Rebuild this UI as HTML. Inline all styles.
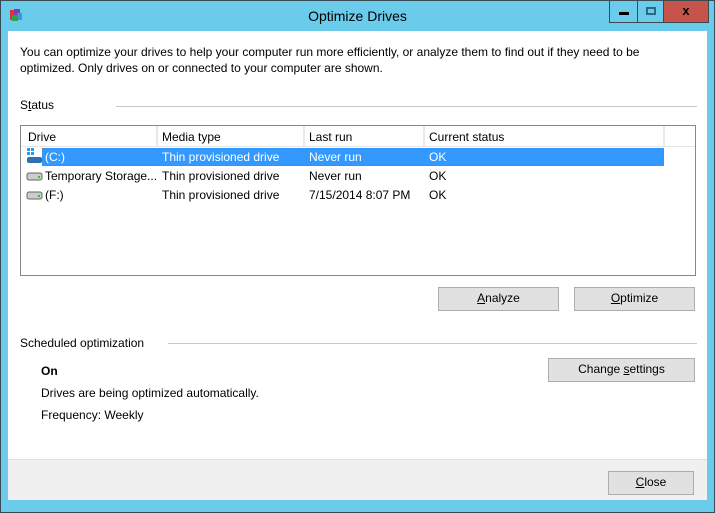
<!DOCTYPE html>
<html><head><style>
*{margin:0;padding:0;box-sizing:border-box}
body{width:715px;height:513px;overflow:hidden;font-family:"Liberation Sans",sans-serif;font-size:12px;color:#000;background:#fff}
.win{position:absolute;left:0;top:0;width:715px;height:513px;background:#6bcbea;border:1px solid #3a4a55}
.abs{position:absolute;white-space:nowrap}
.client{position:absolute;left:7px;top:30px;width:699px;height:469px;background:#fff}
.footer{position:absolute;left:0;top:428px;width:699px;height:41px;background:#f0f0f0;border-top:1px solid #dfdfdf}
.btn{position:absolute;background:#e1e1e1;border:1px solid #adadad;text-align:center;line-height:21px}
.cbtn{position:absolute;top:0;height:22px;border:1px solid #3a4a55;border-top:none}
</style></head><body>
<div class="win">
  <svg class="abs" style="left:7px;top:6px" width="16" height="16" viewBox="0 0 16 16"><rect x="2" y="3" width="6" height="10" fill="#d33"/><rect x="6" y="2" width="6" height="10" fill="#7a3fb0"/><rect x="9" y="6" width="5" height="7" fill="#4a8fd9"/><rect x="4" y="8" width="6" height="6" fill="#2da24a"/></svg>
  <div class="abs" style="left:0;width:713px;top:7px;text-align:center;font-size:14px;color:#000">Optimize Drives</div>
  <div class="cbtn" style="left:608px;width:29px;background:#6bcbea"><div style="position:absolute;left:9px;top:11px;width:10px;height:3px;background:#000"></div></div>
  <div class="cbtn" style="left:636px;width:27px;background:#6bcbea"><div style="position:absolute;left:8px;top:6px;width:10px;height:8px;border:2px solid #2a6a88"></div></div>
  <div class="cbtn" style="left:662px;width:46px;background:#c7544a;text-align:center;font-weight:bold;font-size:13px;line-height:20px">x</div>
  <div class="client">
    <div class="abs" style="left:12px;top:13px;line-height:16px;color:#000">You can optimize your drives to help your computer run more efficiently, or analyze them to find out if they need to be<br>optimized. Only drives on or connected to your computer are shown.</div>
    <div class="abs" style="left:12px;top:67px">S<u>t</u>atus</div>
    <div class="abs" style="left:108px;top:75px;width:581px;height:1px;background:#c8c8c8"></div>
    <div class="abs" style="left:12px;top:94px;width:676px;height:151px;border:1px solid #828790;background:#fff">
      <div class="abs" style="left:0;top:0;width:674px;height:21px;background:#fff;border-bottom:1px solid #e5e5e5"></div>
      <div class="abs" style="left:7px;top:4px">Drive</div>
      <div class="abs" style="left:135px;top:0;width:2px;height:21px;background:#e8e8e8"></div>
      <div class="abs" style="left:141px;top:4px">Media type</div>
      <div class="abs" style="left:282px;top:0;width:2px;height:21px;background:#e8e8e8"></div>
      <div class="abs" style="left:288px;top:4px">Last run</div>
      <div class="abs" style="left:402px;top:0;width:2px;height:21px;background:#e8e8e8"></div>
      <div class="abs" style="left:408px;top:4px">Current status</div>
      <div class="abs" style="left:642px;top:0;width:2px;height:21px;background:#e8e8e8"></div>
      <div class="abs" style="left:21px;top:22px;width:622px;height:18px;background:#3399ff;border:1px dotted #c86a1a"></div>
      <div class="abs" style="left:24px;top:24px;color:#fff">(C:)</div>
      <div class="abs" style="left:141px;top:24px;color:#fff">Thin provisioned drive</div>
      <div class="abs" style="left:288px;top:24px;color:#fff">Never run</div>
      <div class="abs" style="left:408px;top:24px;color:#fff">OK</div>
      <svg class="abs" style="left:5px;top:21px" width="18" height="18"><rect x="1" y="1" width="3" height="3" fill="#1ea1f1"/><rect x="5" y="1" width="3" height="3" fill="#1ea1f1"/><rect x="1" y="5" width="3" height="3" fill="#1ea1f1"/><rect x="5" y="5" width="3" height="3" fill="#1ea1f1"/><rect x="1" y="10" width="15" height="6" rx="2" fill="#2f6fb5"/></svg>
      <svg class="abs" style="left:5px;top:43px" width="18" height="14"><rect x="1" y="4" width="15" height="7" rx="2" fill="#ccc" stroke="#666"/><rect x="12" y="7" width="2" height="2" fill="#2c2"/></svg>
      <div class="abs" style="left:24px;top:43px">Temporary Storage...</div>
      <div class="abs" style="left:141px;top:43px">Thin provisioned drive</div>
      <div class="abs" style="left:288px;top:43px">Never run</div>
      <div class="abs" style="left:408px;top:43px">OK</div>
      <svg class="abs" style="left:5px;top:62px" width="18" height="14"><rect x="1" y="4" width="15" height="7" rx="2" fill="#ccc" stroke="#666"/><rect x="12" y="7" width="2" height="2" fill="#2c2"/></svg>
      <div class="abs" style="left:24px;top:62px">(F:)</div>
      <div class="abs" style="left:141px;top:62px">Thin provisioned drive</div>
      <div class="abs" style="left:288px;top:62px">7/15/2014 8:07 PM</div>
      <div class="abs" style="left:408px;top:62px">OK</div>
    </div>
    <div class="btn" style="left:430px;top:256px;width:121px;height:24px"><u>A</u>nalyze</div>
    <div class="btn" style="left:566px;top:256px;width:121px;height:24px"><u>O</u>ptimize</div>
    <div class="abs" style="left:12px;top:305px">Scheduled optimization</div>
    <div class="abs" style="left:160px;top:312px;width:529px;height:1px;background:#c8c8c8"></div>
    <div class="btn" style="left:540px;top:327px;width:147px;height:24px">Change <u>s</u>ettings</div>
    <div class="abs" style="left:33px;top:333px;font-weight:bold">On</div>
    <div class="abs" style="left:33px;top:355px">Drives are being optimized automatically.</div>
    <div class="abs" style="left:33px;top:377px">Frequency: Weekly</div>
    <div class="footer">
      <div class="btn" style="left:600px;top:11px;width:86px;height:24px"><u>C</u>lose</div>
    </div>
  </div>
</div>
</body></html>
